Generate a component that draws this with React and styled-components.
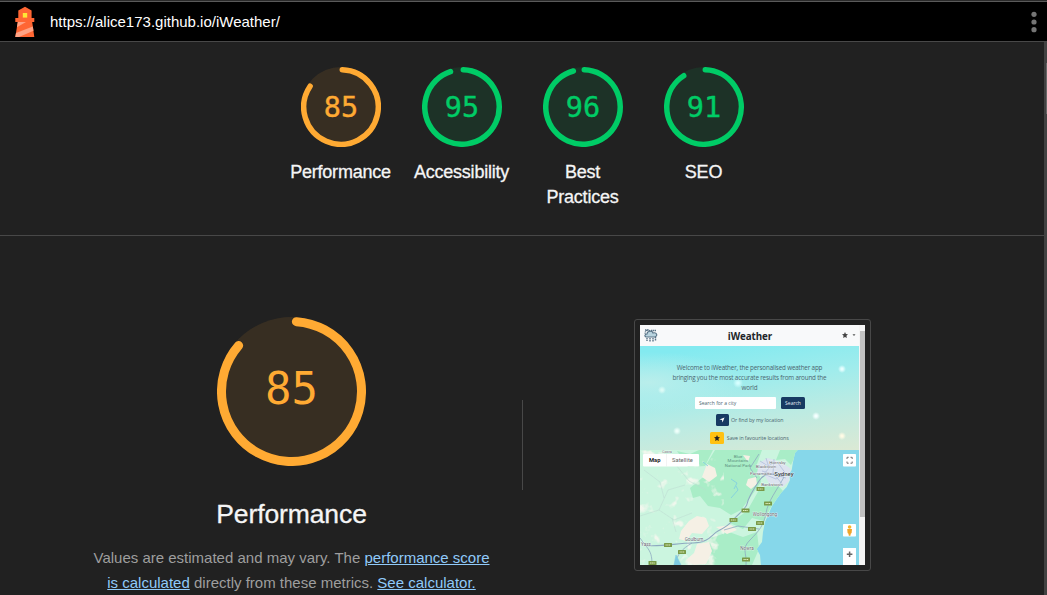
import React from 'react';
import styled, { createGlobalStyle } from 'styled-components';

const ORANGE = '#ffaa33';
const GREEN = '#00cc66';

const GlobalStyle = createGlobalStyle`
  * { box-sizing: border-box; }
  html, body { margin: 0; height: 100%; overflow: hidden; background: #212121; }
  body { font-family: "Liberation Sans", Arial, sans-serif; }
`;

const Page = styled.div`
  width: 1047px;
  height: 595px;
  overflow: hidden;
  display: flex;
  flex-direction: column;
  color: #f5f5f5;
  background: #212121;
`;

const TopBar = styled.header`
  flex: none;
  height: 42px;
  display: flex;
  align-items: center;
  padding: 2px 10px 0 14px;
  background: linear-gradient(#2a2a2a 0 1px, #5a5a5a 1px 2px, #000 2px);
  border-bottom: 1px solid #484848;
`;

const Url = styled.span`
  margin-left: 12px;
  font-size: 15px;
  color: #fff;
  flex: 1;
  line-height: 20px;
`;

const Body = styled.div`
  flex: 1;
  display: flex;
  min-height: 0;
`;

const Report = styled.main`
  flex: 1;
  overflow: hidden;
`;

const ScrollTrack = styled.div`
  width: 3px;
  padding: 21px 0 0 2px;
  background: #424242;
`;

const ScrollThumb = styled.div`
  height: 51px;
  background: #686868;
`;

const Scores = styled.section`
  height: 194px;
  display: flex;
  justify-content: center;
  padding: 25px 0 0 1px;
  border-bottom: 1px solid #484848;
`;

const Score = styled.div`
  width: 121px;
  padding: 0 8px;
  display: flex;
  flex-direction: column;
  align-items: center;
  font-size: 18px;
  line-height: 25px;
  letter-spacing: -0.22px;
  text-align: center;
  -webkit-text-stroke: 0.3px #f5f5f5;
`;

const ScoreLabel = styled.span`
  margin-right: 1px;
`;

const GaugeBox = styled.div`
  width: ${(p) => p.$size}px;
  height: ${(p) => p.$size}px;
  margin-bottom: ${(p) => p.$gap}px;
  display: grid;
  place-items: center;
  & > * { grid-area: 1 / 1; }
`;

const GaugeNumber = styled.span`
  font-family: "DejaVu Sans Mono", monospace;
  font-size: ${(p) => p.$font}px;
  line-height: 1;
  letter-spacing: 0;
  margin-top: ${(p) => p.$drop}px;
  color: ${(p) => p.$color};
  -webkit-text-stroke: ${(p) => p.$weight}px ${(p) => p.$color};
`;

const Detail = styled.section`
  display: flex;
  padding-top: 81px;
`;

const Summary = styled.div`
  width: 522px;
  padding: 0 0 0 61px;
  display: flex;
  flex-direction: column;
  align-items: center;
`;

const Title = styled.h1`
  margin: 0;
  font-size: 26.5px;
  font-weight: 400;
  line-height: 36px;
  letter-spacing: -0.1px;
  -webkit-text-stroke: 0.3px #f5f5f5;
`;

const Note = styled.p`
  margin: 13px 0 0;
  width: 400px;
  font-size: 15px;
  line-height: 25px;
  text-align: center;
  color: #9e9e9e;
  a { color: #90caf9; text-decoration: underline; }
`;

const Separator = styled.div`
  width: 1px;
  height: 90px;
  margin-top: 83px;
  background: #484848;
`;

const Frame = styled.div`
  width: 237px;
  height: 252px;
  margin: 2px 0 0 111px;
  padding: 5px;
  border: 1px solid #484848;
  border-radius: 3px;
`;

const Shot = styled.div`
  width: 225px;
  height: 240px;
  display: flex;
  overflow: hidden;
  background: #f8f8fa;
  font-family: "Open Sans", sans-serif;
  color: #4b6670;
`;

const ShotPage = styled.div`
  width: 219px;
`;

const ShotHeader = styled.div`
  height: 21px;
  display: grid;
  grid-template-columns: 40px 1fr 40px;
  align-items: center;
  padding: 1px 3px 0 4px;
  background: #f8f9fa;
  text-align: center;
  font-size: 9.8px;
  letter-spacing: -0.1px;
  font-weight: 700;
  color: #212529;
`;

const HeaderMenu = styled.span`
  display: flex;
  justify-content: flex-end;
  gap: 4px;
  margin-top: -3px;
`;

const Hero = styled.div`
  height: 104px;
  padding-top: 17px;
  display: flex;
  flex-direction: column;
  align-items: center;
  background:
    radial-gradient(circle at 202px 23px, #e8ffff 0 1px, transparent 4px),
    radial-gradient(circle at 176px 70px, #f4ffff 0 1px, transparent 4px),
    radial-gradient(circle at 37px 85px, #eefffa 0 1px, transparent 4px),
    radial-gradient(circle at 98px 37px, #d4ffff 0 1px, transparent 5px),
    radial-gradient(circle at 202px 90px, #fffbe5 0 1px, transparent 4px),
    radial-gradient(circle at 22px 44px, #dcfbf6 0 1px, transparent 4px),
    radial-gradient(ellipse at 4% 35%, #b9eeeb 0%, transparent 32%),
    linear-gradient(172deg, #83eaf0 8%, #a0ecec 38%, #bdebe2 66%, #dbe9d4 100%);
`;

const Welcome = styled.div`
  height: 30px;
  font-size: 6.3px;
  letter-spacing: -0.17px;
  line-height: 10px;
  text-align: center;
  white-space: pre-line;
`;

const SearchRow = styled.div`
  display: flex;
  gap: 5px;
  margin: 4px 0 5px 1px;
`;

const Field = styled.div`
  width: 81px;
  height: 12px;
  padding-left: 4px;
  border-radius: 1px;
  background: #fff;
  font-size: 5px;
  line-height: 13px;
`;

const SearchButton = styled.div`
  width: 24px;
  height: 12px;
  border-radius: 1.5px;
  background: #173a62;
  color: #e6edf4;
  font-size: 5px;
  line-height: 12px;
  text-align: center;
`;

const ActionRow = styled.div`
  display: flex;
  align-items: center;
  gap: 2.5px;
  height: 12px;
  margin-bottom: 6px;
  font-size: 5.3px;
  letter-spacing: -0.1px;
  white-space: nowrap;
`;

const ActionIcon = styled.span`
  width: ${(p) => p.$w}px;
  height: 12px;
  display: grid;
  place-items: center;
  border-radius: 1.5px;
  background: ${(p) => p.$bg};
`;

const MiniScroll = styled.div`
  width: 6px;
  height: 240px;
  padding: 6px 0.5px 0;
  background: #f4f4f4;
`;

const MiniThumb = styled.div`
  height: 186px;
  background: #c1c1c1;
`;

function Gauge({ size, stroke, value, color, font, start, end, gap, drop = 0, weight = 0 }) {
  const c = size / 2;
  const r = c - stroke / 2;
  const point = (deg) => {
    const a = ((deg - 90) * Math.PI) / 180;
    return `${c + r * Math.cos(a)} ${c + r * Math.sin(a)}`;
  };
  return (
    <GaugeBox $size={size} $gap={gap}>
      <svg width={size} height={size} fill="none">
        <circle cx={c} cy={c} r={c} fill={color} fillOpacity=".1" />
        <path
          d={`M${point(start)}A${r} ${r} 0 1 1 ${point(end)}`}
          stroke={color}
          strokeWidth={stroke}
          strokeLinecap="round"
        />
      </svg>
      <GaugeNumber $font={font} $color={color} $drop={drop} $weight={weight}>{value}</GaugeNumber>
    </GaugeBox>
  );
}

function Lighthouse() {
  return (
    <svg width="24" height="32" viewBox="0 0 24 32">
      <path d="M11 .8 17.6 4.6V12h2.7v4h-2.1l2.1 15H1.3L3.8 16H1.3v-4h3V4.6z" fill="#ff6633" />
      <path d="M3.8 16H12L2.9 21.2zM2 27 18.8 20.4l.7 4.4L5 31H1.3z" fill="#ffa385" />
      <rect x="8.8" y="7" width="4.4" height="4.6" fill="#ffe736" />
    </svg>
  );
}

function Dots() {
  return (
    <svg width="6" height="22" fill="#757575">
      <circle cx="3" cy="3.3" r="2.6" />
      <circle cx="3" cy="11" r="2.6" />
      <circle cx="3" cy="18.7" r="2.6" />
    </svg>
  );
}

function Star({ size, color }) {
  return (
    <svg width={size} height={size} viewBox="0 0 16 16" fill={color}>
      <path d="m8 0 2.4 5.3 5.6.7-4.2 3.9L13 16l-5-3-5 3 1.2-6.1L0 6l5.6-.7z" />
    </svg>
  );
}

function WeatherLogo() {
  return (
    <svg width="14" height="14" viewBox="0 0 14 14" fill="none" stroke="#587386" strokeWidth="1.1">
      <circle cx="4" cy="4" r="2.9" strokeDasharray="1 .6" />
      <path d="M4 8H2C0 7 1 5 3 5c0-3 5-4 6-1 4-1 5 3 2 4z" fill="#b9d4df" />
      <path d="M3 9v3M6 9v4M9 9v4M11.5 8v4M1 1h4M7 1.5h5" strokeWidth="1.4" strokeDasharray="1.5 .5" />
    </svg>
  );
}

const shields = [
  [28, 95], [42, 102], [93.5, 70], [105.5, 60.5], [112, 79],
  [120.5, 39], [128, 53.5], [120, 73], [106, 109.5], [12.5, 113],
];

const places = [
  [137.5, 13.5, 'Hornsby', 4.4], [126, 18, 'Blacktown', 4.4], [121, 25, 'Parramatta', 4.4],
  [132, 35.5, 'Bankstown', 4.4], [125, 66, 'Wollongong', 4.6], [54, 91, 'Goulburn', 4.6],
  [6, 96, 'Yass', 4.6], [107, 100, 'Nowra', 4.6], [27, 3.4, 'Cowra', 3.4],
];

function CoastMap() {
  const land =
    'M0 0H157.7L155 3 153 12 151.7 20 149 24 150 30 146.7 37 141 43 136.7 49 132 56 129 63 125 72 123 82 122 92 116.7 99 120 105 121 116H0z';
  return (
    <svg width="219" height="115" viewBox="0 0 219 115" display="block">
      <defs>
        <clipPath id="land"><path d={land} /></clipPath>
        <filter id="patches" x="0" y="0" width="100%" height="100%">
          <feTurbulence type="fractalNoise" baseFrequency=".075" numOctaves="3" seed="8" />
          <feColorMatrix values="0 0 0 0 .96  0 0 0 0 .94  0 0 0 0 .88  7 0 0 0 -4.2" />
        </filter>
      </defs>
      <rect width="219" height="115" fill="#86d7ea" />
      <path d={land} fill="#cbf5df" />
      <g clipPath="url(#land)">
        <g fill="#a9edc7">
          <path d="M75 0H122L117 14 121 32 112 45 101 60 91 65 80 58 68 56 60 46 53 48 50 38 62 28 73 22 66 15z" />
          <path d="M119 40 134 31 143 41 131 57 124 71 112 68 103 79 90 73 107 61z" />
          <path d="M70 88 89 82 103 87 117 82 119 99 112 115H65L72 104 65 99z" />
          <path d="M37 1 50 4 59 0H73L65 16 48 17z" />
          <path d="M140 0H158L151 15 145 9 136 10z" />
        </g>
        <rect width="84" height="115" filter="url(#patches)" opacity=".8" />
        <g fill="#f5f0e5">
          <path d="M49 71l8-5 9 2 3 8-7 8-10-1-6 8-7-2 2-8zM57 94l12-2 3 9-6 13-12 1-8-5 8-7z" />
          <path d="M67 14l8 4 2 8-8 6-7-5zM76 77l15-2 6 5-10 4z" />
          <path d="M108 29l8-2 1 7-6 5-5-4zM103 5l7 1-2 6z" />
        </g>
        <path d="M119 13 128 8 143 13 151 19 149 31 143 37 130 35 125 26 117 23z" fill="#dce3ef" />
        <path d="M120 11l8 5 7-4M126 8l3 10-5 6 12 5 9-6M134 9l-1 14 10 12M122 21l24 7M138 13l8 11" stroke="#aab7d8" strokeWidth=".7" fill="none" />
        <g fill="none" stroke="#8ea9c0">
          <path d="M5 95.5C23 97 37 93 53 93S72 84 78 81 90 74 93 70 106 59 107 54 111 43 119 31 135 26 144 26" strokeWidth="1.1" />
          <path d="M5 95 0 88M6 96C11 102 12 106 12 115M52 93C42 99 37 104 35 115M144 27C137 40 128 51 126 63S119 81 110 90 107 102 106 115M84 80 98 76 119 79M117 28 110 18 119 4" strokeWidth=".8" />
          <path d="M0 66 19 60 34 70 52 63M19 60 28 40 45 35M36 15 49 31 66 40M4 20 20 32 24 48M36 82 32 68" stroke="#bcd8d0" strokeWidth=".5" />
        </g>
        <g fill="none" stroke="#7ecbe2">
          <path d="M91 48 98 40 96 36M91 29 97 33 94 39M63 12l5 4" strokeWidth=".8" />
          <path d="M36 105 34 115 41 115z" fill="#7ecbe2" strokeWidth=".6" />
        </g>
      </g>
      {shields.map(([x, y]) => (
        <g key={`${x}-${y}`}>
          <rect x={x - 4} y={y - 2} width="8" height="4" rx=".5" fill="#7a9a48" />
          <path d={`M${x - 2.5} ${y}h5`} stroke="#dcebbd" strokeWidth="1" strokeDasharray="1.3 .4" />
        </g>
      ))}
      <g fontFamily="Roboto, sans-serif" textAnchor="middle" fill="#59646b" stroke="#fff" strokeWidth=".5" paintOrder="stroke">
        {places.map(([x, y, name, size]) => (
          <text key={name} x={x} y={y} fontSize={size}>{name}</text>
        ))}
        <text x="144" y="25.5" fontSize="6" fill="#333b43" fontWeight="500">Sydney</text>
        <g fontSize="4.4" fill="#5e9281" stroke="none">
          <text x="98" y="7.5">Blue</text>
          <text x="98" y="12">Mountains</text>
          <text x="98" y="16.5">National Park</text>
        </g>
      </g>
      <rect x="3" y="4" width="56" height="12.5" rx="1" fill="#fff" />
      <path d="M26.5 4v12.5" stroke="#e7e7e7" strokeWidth=".5" />
      <g fontFamily="Roboto, sans-serif" fontSize="5.8" textAnchor="middle">
        <text x="14.7" y="12.2" fontWeight="700" fill="#222">Map</text>
        <text x="42.5" y="12.2" fill="#666">Satellite</text>
      </g>
      <g fill="#fff">
        <rect x="203" y="4" width="13" height="12.5" rx=".7" />
        <rect x="203" y="74" width="13" height="12.5" rx=".7" />
        <path d="M203 98h13v17h-13z" />
      </g>
      <path d="M207 9V7.3h1.7M210.5 7.3h1.7V9M212.2 11.5v1.7h-1.7M208.7 13.2H207v-1.7" fill="none" stroke="#777" strokeWidth="1" />
      <path d="M206.8 104.3h5.6M209.6 101.5v5.6" stroke="#666" strokeWidth="1.5" />
      <circle cx="209.6" cy="77" r="1.8" fill="#f5b52e" />
      <path d="M207.2 79h4.8l-.4 4-.9.8-.3 2h-1.6l-.3-2-.9-.8z" fill="#eea52a" />
    </svg>
  );
}

function PageShot() {
  return (
    <Shot>
      <ShotPage>
        <ShotHeader>
          <WeatherLogo />
          <span>iWeather</span>
          <HeaderMenu>
            <Star size={6} color="#444" />
            <svg width="4" height="6"><path d="M.5 2.3h3L2 4z" fill="#555" /></svg>
          </HeaderMenu>
        </ShotHeader>
        <Hero>
          <Welcome>{'Welcome to iWeather, the personalised weather app\nbringing you the most accurate results from around the\nworld'}</Welcome>
          <SearchRow>
            <Field>Search for a city</Field>
            <SearchButton>Search</SearchButton>
          </SearchRow>
          <ActionRow>
            <ActionIcon $w={13} $bg="#173a62">
              <svg width="6" height="6" fill="#fff"><path d="M5.5.5 3.5 5.5 3 3 .5 2.5z" /></svg>
            </ActionIcon>
            Or find by my location
          </ActionRow>
          <ActionRow>
            <ActionIcon $w={14} $bg="#ffc112"><Star size={6} color="#222" /></ActionIcon>
            Save in favourite locations
          </ActionRow>
        </Hero>
        <CoastMap />
      </ShotPage>
      <MiniScroll><MiniThumb /></MiniScroll>
    </Shot>
  );
}

const scores = [
  { label: 'Performance', value: 85, color: ORANGE, end: 304 },
  { label: 'Accessibility', value: 95, color: GREEN, end: 342 },
  { label: 'Best Practices', value: 96, color: GREEN, end: 345 },
  { label: 'SEO', value: 91, color: GREEN, end: 327 },
];

export default function App() {
  return (
    <Page>
      <GlobalStyle />
      <TopBar>
        <Lighthouse />
        <Url>https://alice173.github.io/iWeather/</Url>
        <Dots />
      </TopBar>
      <Body>
        <Report>
          <Scores>
            {scores.map((s) => (
              <Score key={s.label}>
                <Gauge size={80} stroke={5.5} font={28.5} start={2} gap={13} drop={3} weight={0.4} value={s.value} color={s.color} end={s.end} />
                <ScoreLabel>{s.label}</ScoreLabel>
              </Score>
            ))}
          </Scores>
          <Detail>
            <Summary>
              <Gauge size={149} stroke={9} font={44} start={4} end={311} gap={30} drop={-5} value={85} color={ORANGE} />
              <Title>Performance</Title>
              <Note>
                Values are estimated and may vary. The <a>performance score is calculated</a> directly from these metrics. <a>See calculator.</a>
              </Note>
            </Summary>
            <Separator />
            <Frame><PageShot /></Frame>
          </Detail>
        </Report>
        <ScrollTrack><ScrollThumb /></ScrollTrack>
      </Body>
    </Page>
  );
}
